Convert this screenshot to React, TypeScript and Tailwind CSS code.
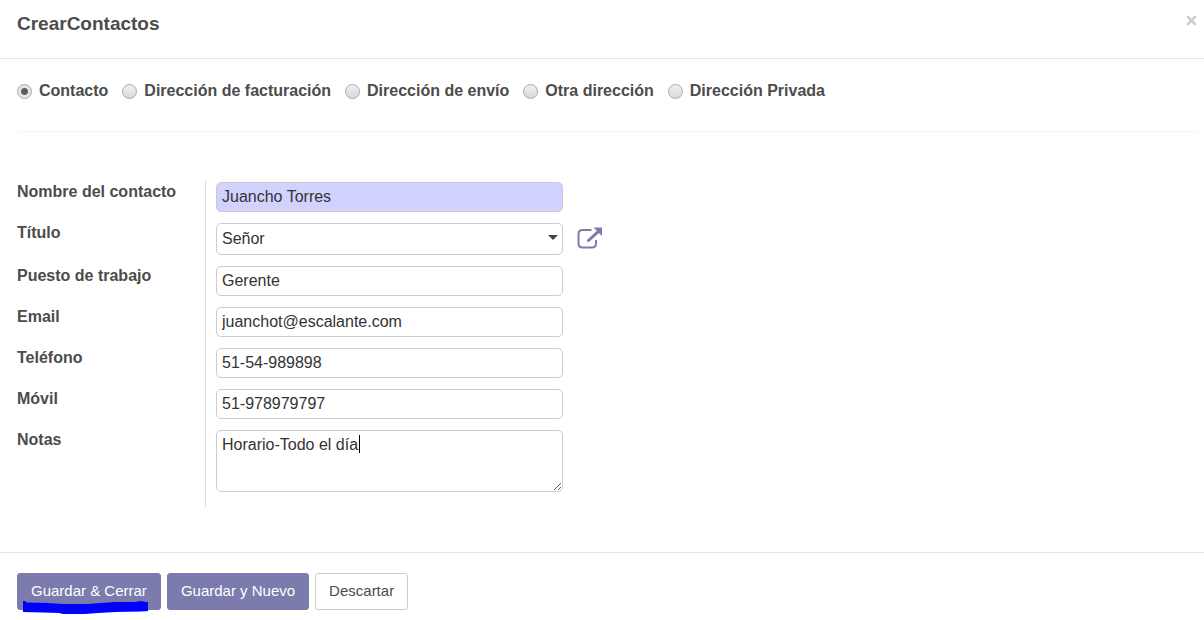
import React from "react";

const kinds = [
  "Contacto",
  "Dirección de facturación",
  "Dirección de envío",
  "Otra dirección",
  "Dirección Privada",
];

const inputClass =
  "block h-[30px] w-full rounded-[5px] border border-[#cccccc] px-[5px] text-base text-[#333333] outline-none";

function Row({
  id,
  label,
  aside,
  last,
  children,
}: {
  id: string;
  label: string;
  aside?: React.ReactNode;
  last?: boolean;
  children: React.ReactNode;
}) {
  return (
    <div className="flex">
      <label
        htmlFor={id}
        className="w-[189px] shrink-0 border-r border-[#dddddd] text-base leading-6 font-bold text-[#4c4c4c]"
      >
        {label}
      </label>
      <div className={`relative ml-2.5 w-[347px] pt-0.5 ${last ? "pb-[15px]" : "pb-[9px]"}`}>
        {children}
      </div>
      {aside}
    </div>
  );
}

export default function App() {
  return (
    <form
      className="bg-white font-['Liberation_Sans',Arial,sans-serif] text-[#4c4c4c]"
      onSubmit={(e) => e.preventDefault()}
    >
      <header className="flex items-start justify-between border-b border-[#e5e5e5] pt-2.5 pr-[7px] pb-5 pl-[17px]">
        <h1 className="text-[19px] leading-7 font-bold">CrearContactos</h1>
        <button type="button" aria-label="Cerrar" className="pt-[5px] text-[#cccccc]">
          <svg width="11" height="11" viewBox="0 0 11 11" fill="none" stroke="currentColor" strokeWidth="2.6">
            <path d="M1.2 1.2 9.8 9.8M9.8 1.2 1.2 9.8" />
          </svg>
        </button>
      </header>

      <main className="pl-[17px]">
        <div className="mr-[5px] flex flex-wrap gap-x-3.5 border-b border-[#f5f5f5] pt-5 pb-7">
          {kinds.map((kind, i) => (
            <label key={kind} className="flex items-center gap-[7px] text-base leading-6 font-bold">
              <input
                type="radio"
                name="tipo"
                defaultChecked={i === 0}
                className="size-[15px] appearance-none rounded-full border border-[#a9a9a9] bg-linear-to-b from-[#f0f0f0] to-[#d9d9d9] checked:bg-[radial-gradient(circle,#5c5c5c_3px,#e6e6e6_4px)]"
              />
              {kind}
            </label>
          ))}
        </div>

        <div className="pt-12 pb-[45px]">
          <Row id="nombre" label="Nombre del contacto">
            <input id="nombre" defaultValue="Juancho Torres" className={`${inputClass} bg-[#d2d2ff]`} />
          </Row>
          <Row
            id="titulo"
            label="Título"
            aside={
              <button type="button" aria-label="Abrir título" className="mt-1.5 ml-[14px] self-start text-[#7c7bad]">
                <svg width="26" height="22" viewBox="0 0 26 22" fill="none" stroke="currentColor">
                  <path
                    strokeWidth="2"
                    d="M14.500 3H5.500Q1.500 3 1.500 7V16.500Q1.500 20.500 5.500 20.500H15Q19 20.500 19 16.500V13"
                  />
                  <path strokeWidth="3" strokeLinecap="round" d="M11.500 13.500 21 4.800" />
                  <path fill="currentColor" stroke="none" d="M16.500 .5H25V9Z" />
                </svg>
              </button>
            }
          >
            <select
              id="titulo"
              defaultValue="Señor"
              className="block h-8 w-full appearance-none rounded-[5px] border border-[#cccccc] bg-white px-[5px] text-base text-[#333333] outline-none"
            >
              <option>Señor</option>
              <option>Señora</option>
            </select>
            <svg
              className="pointer-events-none absolute top-3.5 right-[5px]"
              width="10"
              height="5"
              viewBox="0 0 10 5"
              fill="#444444"
            >
              <path d="M0 0H10L5 5Z" />
            </svg>
          </Row>
          <Row id="puesto" label="Puesto de trabajo">
            <input id="puesto" defaultValue="Gerente" className={inputClass} />
          </Row>
          <Row id="email" label="Email">
            <input id="email" type="email" defaultValue="juanchot@escalante.com" className={inputClass} />
          </Row>
          <Row id="telefono" label="Teléfono">
            <input id="telefono" type="tel" defaultValue="51-54-989898" className={inputClass} />
          </Row>
          <Row id="movil" label="Móvil">
            <input id="movil" type="tel" defaultValue="51-978979797" className={inputClass} />
          </Row>
          <Row id="notas" label="Notas" last>
            <textarea
              id="notas"
              defaultValue="Horario-Todo el día"
              className="block h-[62px] w-full resize-y rounded-[5px] border border-[#cccccc] px-[5px] py-0.5 text-base leading-6 text-[#333333] outline-none"
            />
            <span className="absolute top-[7px] left-[143px] h-[18px] w-px bg-black" />
          </Row>
        </div>
      </main>

      <footer className="flex gap-1.5 border-t border-[#e5e5e5] px-[17px] pt-5 pb-2">
        <button
          type="submit"
          className="relative h-[37px] rounded-[3px] border border-[#7c7bad] bg-[#7c7bad] px-[13px] text-[15px] text-white"
        >
          Guardar &amp; Cerrar
          <svg className="absolute top-[27px] left-[5px]" width="126" height="13" viewBox="0 0 126 13" fill="#0000fe">
            <path d="M0 0H3V1.500L25 2L40 3H65L78 2L92 1H112L118 0L123 1H125V10L118 10.500L93 11L75 12L62 13H40L36 12L20 11.500L0 11Z" />
          </svg>
        </button>
        <button
          type="button"
          className="h-[37px] rounded-[3px] border border-[#7c7bad] bg-[#7c7bad] px-[13px] text-[15px] text-white"
        >
          Guardar y Nuevo
        </button>
        <button
          type="button"
          className="h-[37px] rounded-[3px] border border-[#cccccc] bg-white px-[13px] text-[15px] text-[#4c4c4c]"
        >
          Descartar
        </button>
      </footer>
    </form>
  );
}
